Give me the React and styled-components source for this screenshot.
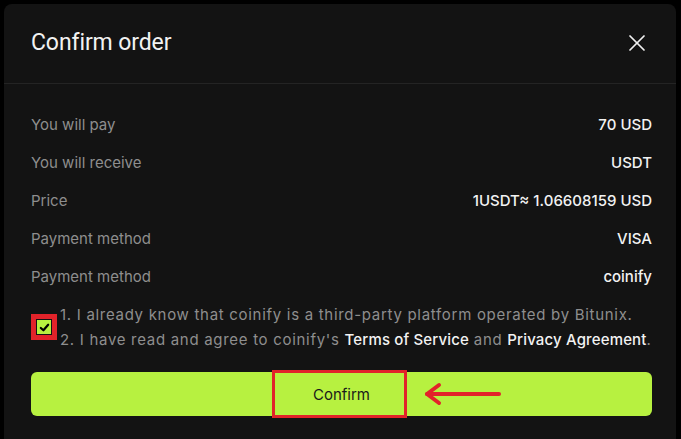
import React from "react";
import styled, { createGlobalStyle } from "styled-components";

const Global = createGlobalStyle`
  html, body { margin: 0; padding: 0; background: #000; }
  body { font-family: Inter, "Noto Sans", sans-serif; overflow: hidden; }
  * { box-sizing: border-box; }
`;

const Page = styled.div`
  width: 681px;
  height: 439px;
  padding: 4px 5px 0 4px;
  background: #000;
`;

const Modal = styled.div`
  width: 672px;
  height: 435px;
  background: #131313;
  border-radius: 8px 8px 0 0;
  display: flex;
  flex-direction: column;
`;

const Header = styled.div`
  flex: none;
  height: 80px;
  display: flex;
  align-items: center;
  justify-content: space-between;
  padding: 0 24px 2px 27px;
  border-bottom: 1px solid #242424;
`;

const Title = styled.h2`
  margin: 0;
  font-family: Roboto, "Noto Sans", sans-serif;
  font-weight: 400;
  font-size: 23px;
  color: #f2f2f2;
  letter-spacing: -0.1px;
`;

const Close = styled.button`
  background: none;
  border: 0;
  padding: 0;
  width: 30px;
  height: 30px;
  display: flex;
  align-items: center;
  justify-content: center;
  color: #f0f0f0;
`;

const Body = styled.div`
  flex: none;
  padding: 21px 24px 0 27px;
  display: flex;
  flex-direction: column;
`;

const Row = styled.div`
  height: 38px;
  display: flex;
  align-items: center;
  justify-content: space-between;
  font-size: 15px;
`;

const Label = styled.span`
  color: #8e8e8e;
`;

const Value = styled.span`
  color: #f2f2f2;
  font-weight: 500;
`;

const Agreement = styled.div`
  margin-top: 7px;
  display: flex;
  align-items: center;
  gap: 3px;
`;

const CheckMark = styled.div`
  width: 26px;
  height: 26px;
  border: 5px solid #e2232a;
  padding: 1px;
  flex: none;
  display: flex;
`;

const CheckBox = styled.div`
  width: 14px;
  height: 14px;
  background: #b7f140;
  display: flex;
  align-items: center;
  justify-content: center;
`;

const Terms = styled.div`
  font-size: 15px;
  line-height: 25px;
  color: #8e8e8e;
  letter-spacing: 0.7px;
  white-space: nowrap;
`;

const Strong = styled.span`
  color: #f2f2f2;
  font-weight: 500;
  letter-spacing: 0.15px;
`;

const ConfirmButton = styled.button`
  position: relative;
  flex: none;
  margin-top: 20px;
  height: 44px;
  width: 621px;
  border: 0;
  border-radius: 6px;
  background: #b7f140;
  color: #1a1a1a;
  font-family: Inter, "Noto Sans", sans-serif;
  font-size: 15px;
  display: flex;
  align-items: center;
  justify-content: center;
`;

const Highlight = styled.span`
  position: absolute;
  left: 241px;
  top: -2px;
  width: 135px;
  height: 48px;
  border: 3px solid #e2232a;
`;

const Arrow = styled.svg`
  position: absolute;
  left: 392px;
  top: 10px;
`;

const rows = [
  ["You will pay", "70 USD"],
  ["You will receive", "USDT"],
  ["Price", "1USDT≈ 1.06608159 USD"],
  ["Payment method", "VISA"],
  ["Payment method", "coinify"],
];

export default function App() {
  return (
    <>
      <Global />
      <Page>
        <Modal>
          <Header>
            <Title>Confirm order</Title>
            <Close aria-label="close">
              <svg width="28" height="28" viewBox="0 0 24 24" fill="none" stroke="currentColor" strokeWidth="1.5" strokeLinecap="round">
                <path d="M18 6 6 18" />
                <path d="m6 6 12 12" />
              </svg>
            </Close>
          </Header>
          <Body>
            {rows.map(([l, v], i) => (
              <Row key={i}>
                <Label>{l}</Label>
                <Value>{v}</Value>
              </Row>
            ))}
            <Agreement>
              <CheckMark>
                <CheckBox>
                  <svg width="11" height="11" viewBox="0 0 12 12" fill="none" stroke="#000" strokeWidth="2.4" strokeLinecap="round" strokeLinejoin="round">
                    <path d="M2 6.5 4.8 9 10 3" />
                  </svg>
                </CheckBox>
              </CheckMark>
              <Terms>
                <div>1. I already know that coinify is a third-party platform operated by Bitunix.</div>
                <div>
                  2. I have read and agree to coinify's <Strong>Terms of Service</Strong> and{" "}
                  <Strong>Privacy Agreement</Strong>.
                </div>
              </Terms>
            </Agreement>
            <ConfirmButton>
              Confirm
              <Highlight />
              <Arrow width="80" height="24" viewBox="0 0 80 24" fill="none" stroke="#e2232a" strokeWidth="4" strokeLinecap="round" strokeLinejoin="round">
                <path d="M4 12 H76" />
                <path d="M16 3 4 12 16 21" />
              </Arrow>
            </ConfirmButton>
          </Body>
        </Modal>
      </Page>
    </>
  );
}
